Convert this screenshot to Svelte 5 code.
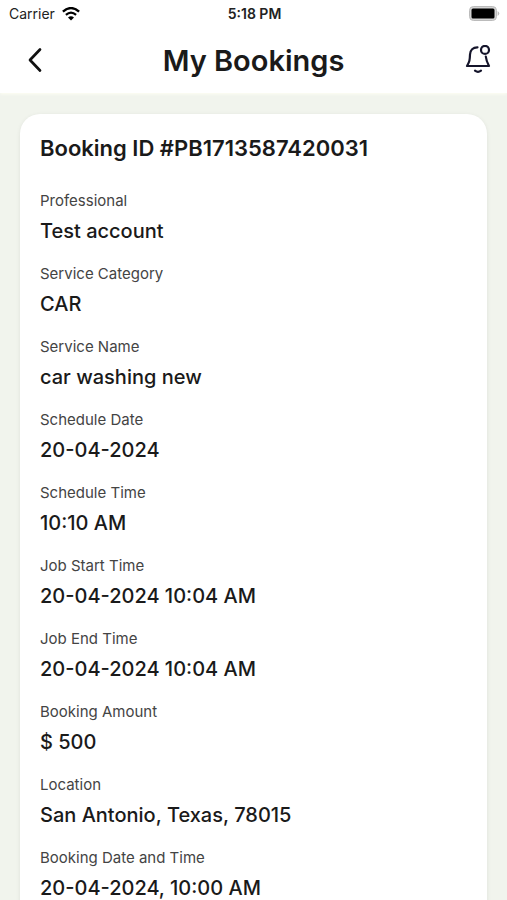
<script lang="ts">
	const fields = [
		{ label: 'Professional', value: 'Test account' },
		{ label: 'Service Category', value: 'CAR' },
		{ label: 'Service Name', value: 'car washing new' },
		{ label: 'Schedule Date', value: '20-04-2024' },
		{ label: 'Schedule Time', value: '10:10 AM' },
		{ label: 'Job Start Time', value: '20-04-2024 10:04 AM' },
		{ label: 'Job End Time', value: '20-04-2024 10:04 AM' },
		{ label: 'Booking Amount', value: '$ 500' },
		{ label: 'Location', value: 'San Antonio, Texas, 78015' },
		{ label: 'Booking Date and Time', value: '20-04-2024, 10:00 AM' },
	];
</script>

<div class="screen">
	<header>
		<div class="status">
			<div class="carrier">
				Carrier
				<svg width="18" height="14" viewBox="0 0 18 14" aria-hidden="true">
					<path d="M0.9 4.6 Q9 -2.4 17.1 4.6" fill="none" stroke="#000" stroke-width="2.4" />
					<path d="M3.9 7.8 Q9 3.4 14.1 7.8" fill="none" stroke="#000" stroke-width="2.2" />
					<path d="M6 10.4 Q9 8 12 10.4 L9 13.4 Z" />
				</svg>
			</div>
			<time>5:18 PM</time>
			<svg class="battery" width="31" height="15" viewBox="0 0 31 15" aria-hidden="true">
				<rect x="0.5" y="0.5" width="27" height="14" rx="4" fill="#d4d4d4" stroke="#bbb" />
				<rect x="2.5" y="2.5" width="23" height="10" rx="1.5" />
				<path d="M28.6 5 Q32 7.5 28.6 10 Z" fill="#bbb" />
			</svg>
		</div>
		<nav>
			<button class="back" aria-label="Back">
				<svg width="16" height="26" viewBox="0 0 16 26">
					<path
						d="M13 2.5 L3 13 L13 23.5"
						fill="none"
						stroke="#111"
						stroke-width="2.7"
						stroke-linecap="round"
						stroke-linejoin="round"
					/>
				</svg>
			</button>
			<h1>My Bookings</h1>
			<button class="bell" aria-label="Notifications">
				<svg width="26" height="30" viewBox="0 0 26 30">
					<g fill="none" stroke="#15152b" stroke-width="2.2" stroke-linecap="round" stroke-linejoin="round">
						<path d="M12.5 2.3 C8 2.2 5.2 5.5 5 9.5 C4.8 15.5 4.6 16.5 2 21 H24 C22 17.3 21.2 15.3 20.8 11.5" />
						<circle cx="20" cy="4.9" r="4" />
						<path d="M10 25.6 Q13 28 16 25.6" />
					</g>
				</svg>
			</button>
		</nav>
	</header>
	<main>
		<section class="card">
			<h2>Booking ID #PB1713587420031</h2>
			<dl>
				{#each fields as { label, value }}
					<div class="field">
						<dt>{label}</dt>
						<dd>{value}</dd>
					</div>
				{/each}
			</dl>
		</section>
	</main>
</div>

<style>
	:global(body) {
		background: #f1f4ed;
	}
	.screen {
		font-family: Inter, 'Liberation Sans', sans-serif;
		color: #1a1a1a;
		height: 100vh;
		display: flex;
		flex-direction: column;
		overflow: hidden;
	}
	header {
		flex: none;
		background: #fff;
		box-shadow: 0 1px 3px #fffff4;
	}
	.status {
		display: grid;
		grid-template-columns: 1fr auto 1fr;
		align-items: center;
		height: 27px;
		padding: 0 7px 0 9px;
		font-size: 14px;
		color: #222;
	}
	.carrier {
		display: flex;
		align-items: center;
		gap: 7px;
	}
	time {
		font-weight: 600;
	}
	.battery {
		justify-self: end;
	}
	nav {
		display: grid;
		grid-template-columns: 1fr auto 1fr;
		align-items: center;
		height: 66px;
		padding: 0 16px;
	}
	button {
		display: flex;
		border: 0;
		padding: 0;
		background: none;
		cursor: pointer;
	}
	.back {
		justify-self: start;
		padding-left: 11px;
	}
	.bell {
		justify-self: end;
	}
	h1 {
		margin: 0;
		font-size: 29px;
		font-weight: 600;
	}
	main {
		padding: 21px 20px;
	}
	.card {
		background: #fff;
		border-radius: 20px;
		padding: 20px;
		box-shadow: 0 1px 4px rgba(0, 0, 0, 0.08);
	}
	h2 {
		margin: 0 0 28px;
		font-size: 22px;
		line-height: 28px;
		font-weight: 600;
	}
	dl {
		margin: 0;
	}
	.field {
		margin-bottom: 17px;
	}
	dt {
		font-size: 15px;
		line-height: 22px;
		color: #444;
	}
	dd {
		margin: 4px 0 0;
		font-size: 20px;
		line-height: 30px;
		font-weight: 500;
	}
</style>
